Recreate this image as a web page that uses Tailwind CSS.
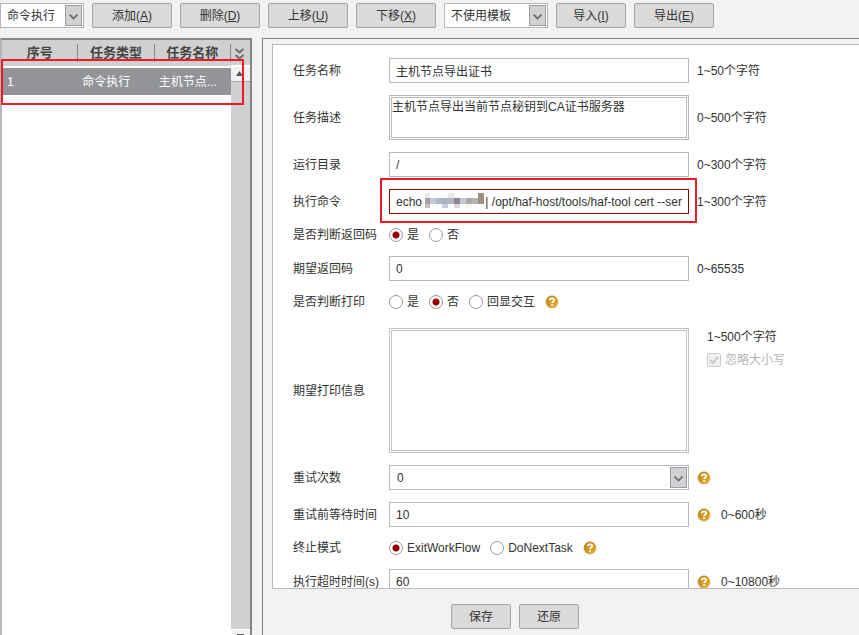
<!DOCTYPE html>
<html lang="zh-CN">
<head>
    <meta charset="UTF-8">
    <meta name="viewport" content="width=device-width, initial-scale=1.0">
    <title>任务编辑</title>
    <script src="https://cdn.jsdelivr.net/npm/@tailwindcss/browser@4"></script>
</head>
<body class="flex flex-col h-screen overflow-hidden bg-[#f2f2f2] text-xs text-[#333] font-['Liberation_Sans','Noto_Sans_CJK_SC',sans-serif]">

    <svg class="absolute size-0">
        <defs>
            <linearGradient id="gold" x1="0" y1="0" x2="1" y2="1">
                <stop offset="0" stop-color="#b8801c"/>
                <stop offset="1" stop-color="#eeb026"/>
            </linearGradient>
        </defs>
        <symbol id="help" viewBox="0 0 14 14">
            <circle cx="7" cy="7.4" r="6.4" fill="#ddd"/>
            <circle cx="7" cy="6.8" r="6.2" fill="url(#gold)"/>
            <path d="M4.7 5.3C4.8 2.6 9.3 2.7 9.2 5.2C9.1 6.6 7.1 6.5 7.1 8.2" fill="none" stroke="#fff" stroke-width="1.7"/>
            <rect x="6.2" y="9.2" width="1.8" height="1.8" fill="#fff"/>
        </symbol>
        <symbol id="arrow" viewBox="0 0 17 21">
            <rect x="0.5" y="0.5" width="16" height="20" fill="#d0d1d3" stroke="#9b9da4"/>
            <path d="M4.5 9.5L8.5 13.5L12.5 9.5" fill="none" stroke="#666" stroke-width="1.7"/>
        </symbol>
    </svg>

    <!-- Toolbar -->
    <div class="flex gap-2 h-[38px] pt-[3px] shrink-0">
        <div class="relative w-[84px]">
            <select aria-label="任务类型" class="appearance-none w-full h-[25px] pl-[6px] bg-white border border-[#b5b6bb]">
                <option>命令执行</option>
            </select>
            <svg class="absolute right-[2px] top-[2px] w-[17px] h-[21px] pointer-events-none"><use href="#arrow"/></svg>
        </div>
        <button class="w-20 h-[25px] rounded-xs border border-[#a5a6ab] bg-[#dadada]">添加(<u>A</u>)</button>
        <button class="w-20 h-[25px] rounded-xs border border-[#a5a6ab] bg-[#dadada]">删除(<u>D</u>)</button>
        <button class="w-20 h-[25px] rounded-xs border border-[#a5a6ab] bg-[#dadada]">上移(<u>U</u>)</button>
        <button class="w-20 h-[25px] rounded-xs border border-[#a5a6ab] bg-[#dadada]">下移(<u>X</u>)</button>
        <div class="relative w-[104px]">
            <select aria-label="模板" class="appearance-none w-full h-[25px] pl-[6px] bg-white border border-[#b5b6bb]">
                <option>不使用模板</option>
            </select>
            <svg class="absolute right-[2px] top-[2px] w-[17px] h-[21px] pointer-events-none"><use href="#arrow"/></svg>
        </div>
        <button class="w-[70px] h-[25px] rounded-xs border border-[#a5a6ab] bg-[#dadada]">导入(<u>I</u>)</button>
        <button class="w-20 h-[25px] rounded-xs border border-[#a5a6ab] bg-[#dadada]">导出(<u>E</u>)</button>
    </div>

    <div class="flex flex-1 min-h-0 gap-[10px]">
        <!-- Task list -->
        <div class="relative flex w-[252px] shrink-0 border-t-2 border-x-2 border-[#85868c] border-l-[#b5b6bb] bg-white">
            <div class="flex-1">
                <table class="w-full table-fixed border-collapse">
                    <thead>
                        <tr class="h-[27px] bg-[#d0d0d0] text-[13px] text-[#444] border-b-2 border-white">
                            <th><div class="border-r border-[#888]">序号</div></th>
                            <th><div class="border-r border-[#888]">任务类型</div></th>
                            <th><div class="border-r border-[#888]">任务名称</div></th>
                        </tr>
                    </thead>
                    <tbody>
                        <tr class="h-7 bg-[#939498] text-white">
                            <td class="pl-[5px]">1</td>
                            <td class="pl-1">命令执行</td>
                            <td class="pl-1">主机节点...</td>
                        </tr>
                    </tbody>
                </table>
            </div>
            <div class="flex flex-col w-[19px] bg-[#d0d0d0]">
                <svg class="w-[19px] h-[25px]" viewBox="0 0 19 25">
                    <path d="M4.5 9L8.5 12.5L12.5 9M4.5 15L8.5 18.5L12.5 15" fill="none" stroke="#6c6c6c" stroke-width="2"/>
                </svg>
                <button aria-label="向上滚动" class="h-[17px] border-t-2 border-b border-t-white border-b-[#aaa] bg-[#f2f2f2]">
                    <svg class="w-[17px] h-[14px]" viewBox="0 0 17 14"><path d="M5 9L8.5 4L12 9Z" fill="#555"/></svg>
                </button>
                <div class="flex-1"></div>
                <button aria-label="向下滚动" class="h-[6px] border-t border-l border-white bg-[#f2f2f2]">
                    <svg class="w-[17px] h-[5px]" viewBox="0 0 17 5"><path d="M5 4H12V5H5Z" fill="#666"/></svg>
                </button>
            </div>
            <div class="absolute -left-px top-[19px] w-[243px] h-[46px] border-2 border-[#ed1c24] pointer-events-none"></div>
        </div>

        <!-- Task details -->
        <div class="flex flex-col flex-1 min-w-0 border-t border-l border-[#808080] pt-[5px] pl-[9px]">
            <form id="task" class="flex flex-col gap-3 flex-1 min-h-0 overflow-hidden bg-white border border-r-0 border-[#b8b8bd] pt-[13px] pl-5">
                <div class="flex items-center shrink-0">
                    <label for="name" class="w-24">任务名称</label>
                    <input id="name" type="text" value="主机节点导出证书" class="w-[300px] h-[25px] px-[6px] border border-[#b8b9be]">
                    <span class="ml-2">1~50个字符</span>
                </div>
                <div class="flex items-center shrink-0">
                    <label for="desc" class="w-24">任务描述</label>
                    <textarea id="desc" class="block w-[300px] h-[45px] resize-none leading-[18px] border-3 border-double border-[#b8b9be]">主机节点导出当前节点秘钥到CA证书服务器</textarea>
                    <span class="ml-2">0~500个字符</span>
                </div>
                <div class="flex items-center shrink-0">
                    <label for="dir" class="w-24">运行目录</label>
                    <input id="dir" type="text" value="/" class="w-[300px] h-[25px] px-[6px] border border-[#b8b9be]">
                    <span class="ml-2">0~300个字符</span>
                </div>
                <div class="flex items-center shrink-0">
                    <label for="cmd" class="w-24">执行命令</label>
                    <div class="relative">
                        <input id="cmd" type="text" value="echo                   | /opt/haf-host/tools/haf-tool cert --ser" class="block w-[300px] h-[25px] pl-[6px] border border-[#900000]">
                        <!-- masked password -->
                        <svg class="absolute left-9 top-1 w-[59px] h-[15px]" viewBox="0 0 59 15" shape-rendering="crispEdges">
                            <path d="M0 0h5v5h-5z" fill="#efe6e8"/>
                            <path d="M23 0h6v5h-6z" fill="#e8ebe2"/>
                            <path d="M0 5h5v6h-5z" fill="#a2a1a6"/>
                            <path d="M5 5h6v6h-6z" fill="#c0ccd8"/>
                            <path d="M11 5h6v6h-6z" fill="#adb8cc"/>
                            <path d="M17 5h6v6h-6z" fill="#a9b4c2"/>
                            <path d="M23 5h6v6h-6z" fill="#b0b8c0"/>
                            <path d="M29 5h6v6h-6z" fill="#928496"/>
                            <path d="M35 5h6v6h-6z" fill="#c8cbcd"/>
                            <path d="M41 5h6v6h-6z" fill="#aba6a8"/>
                            <path d="M47 5h6v6h-6z" fill="#b5b4ae"/>
                            <path d="M53 0h6v11h-6z" fill="#9f9080"/>
                            <path d="M0 11h5v4h-5z" fill="#d6bfbb"/>
                            <path d="M17 11h6v4h-6z" fill="#c3ccda"/>
                            <path d="M29 11h6v4h-6z" fill="#dcdcd8"/>
                            <path d="M41 11h6v4h-6z" fill="#f6f8f0"/>
                        </svg>
                        <div class="absolute -left-[9px] -top-[11px] w-[317px] h-[45px] border-2 border-[#ed1c24] pointer-events-none"></div>
                    </div>
                    <span class="ml-2">1~300个字符</span>
                </div>
                <div class="flex items-center h-[18px] shrink-0">
                    <span class="w-24">是否判断返回码</span>
                    <label class="flex items-center gap-1 w-10"><input type="radio" name="code" checked class="appearance-none size-[14px] rounded-full border border-[#999] bg-white checked:bg-[radial-gradient(circle,#990000_3px,transparent_4px)]">是</label>
                    <label class="flex items-center gap-1 w-10"><input type="radio" name="code" class="appearance-none size-[14px] rounded-full border border-[#999] bg-white checked:bg-[radial-gradient(circle,#990000_3px,transparent_4px)]">否</label>
                </div>
                <div class="flex items-center shrink-0">
                    <label for="expect" class="w-24">期望返回码</label>
                    <input id="expect" type="text" value="0" class="w-[300px] h-[25px] px-[6px] border border-[#b8b9be]">
                    <span class="ml-2">0~65535</span>
                </div>
                <div class="flex items-center h-[18px] shrink-0">
                    <span class="w-24">是否判断打印</span>
                    <label class="flex items-center gap-1 w-10"><input type="radio" name="print" class="appearance-none size-[14px] rounded-full border border-[#999] bg-white checked:bg-[radial-gradient(circle,#990000_3px,transparent_4px)]">是</label>
                    <label class="flex items-center gap-1 w-10"><input type="radio" name="print" checked class="appearance-none size-[14px] rounded-full border border-[#999] bg-white checked:bg-[radial-gradient(circle,#990000_3px,transparent_4px)]">否</label>
                    <label class="flex items-center gap-1"><input type="radio" name="print" class="appearance-none size-[14px] rounded-full border border-[#999] bg-white checked:bg-[radial-gradient(circle,#990000_3px,transparent_4px)]">回显交互</label>
                    <svg class="ml-[10px] size-[14px]"><use href="#help"/></svg>
                </div>
                <div class="flex items-center shrink-0 mt-[5px]">
                    <label for="output" class="w-24">期望打印信息</label>
                    <textarea id="output" class="block w-[300px] h-[125px] resize-none border-3 border-double border-[#c4c4c4]"></textarea>
                    <div class="flex flex-col gap-[5px] self-start ml-[18px]">
                        <span class="leading-[18px]">1~500个字符</span>
                        <label class="flex items-center gap-1 leading-[18px] text-[#b5b5b5]">
                            <span class="relative">
                                <input type="checkbox" checked disabled class="block appearance-none size-[14px] rounded-xs border border-[#ccc] bg-[#f0f0f0]">
                                <svg class="absolute inset-0 size-[14px]" viewBox="0 0 14 14"><path d="M3 7L6 10L11 4" fill="none" stroke="#c8c8c8" stroke-width="2"/></svg>
                            </span>忽略大小写
                        </label>
                    </div>
                </div>
                <div class="flex items-center shrink-0">
                    <label for="retry" class="w-24">重试次数</label>
                    <div class="relative">
                        <select id="retry" class="block appearance-none w-[300px] h-[25px] pl-[7px] bg-white border border-[#b8b9be]">
                            <option>0</option>
                        </select>
                        <svg class="absolute right-[2px] top-[2px] w-[17px] h-[21px] pointer-events-none"><use href="#arrow"/></svg>
                    </div>
                    <svg class="ml-2 size-[14px]"><use href="#help"/></svg>
                </div>
                <div class="flex items-center shrink-0">
                    <label for="wait" class="w-24">重试前等待时间</label>
                    <input id="wait" type="text" value="10" class="w-[300px] h-[25px] px-[6px] border border-[#b8b9be]">
                    <svg class="ml-2 mr-[10px] size-[14px]"><use href="#help"/></svg>
                    <span>0~600秒</span>
                </div>
                <div class="flex items-center h-[18px] shrink-0">
                    <span class="w-24">终止模式</span>
                    <label class="flex items-center gap-1 mr-[10px]"><input type="radio" name="stop" checked class="appearance-none size-[14px] rounded-full border border-[#999] bg-white checked:bg-[radial-gradient(circle,#990000_3px,transparent_4px)]">ExitWorkFlow</label>
                    <label class="flex items-center gap-1 mr-[10px]"><input type="radio" name="stop" class="appearance-none size-[14px] rounded-full border border-[#999] bg-white checked:bg-[radial-gradient(circle,#990000_3px,transparent_4px)]">DoNextTask</label>
                    <svg class="size-[14px]"><use href="#help"/></svg>
                </div>
                <div class="flex items-center shrink-0">
                    <label for="timeout" class="w-24">执行超时时间(s)</label>
                    <input id="timeout" type="text" value="60" class="w-[300px] h-[25px] px-[6px] border border-[#b8b9be]">
                    <svg class="ml-2 mr-[10px] size-[14px]"><use href="#help"/></svg>
                    <span>0~10800秒</span>
                </div>
            </form>
            <div class="flex gap-2 pt-[15px] pb-[6px] pl-[179px] shrink-0">
                <button form="task" class="w-[60px] h-[25px] rounded-xs border border-[#a5a6ab] bg-[#dadada]">保存</button>
                <button form="task" type="reset" class="w-[60px] h-[25px] rounded-xs border border-[#a5a6ab] bg-[#dadada]">还原</button>
            </div>
        </div>
    </div>
</body>
</html>
